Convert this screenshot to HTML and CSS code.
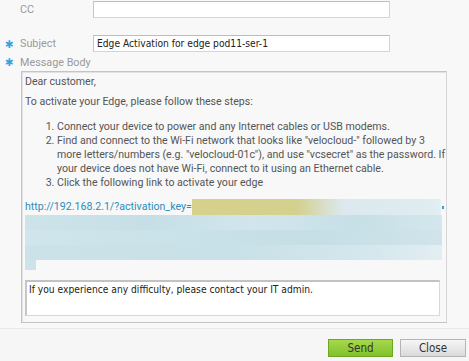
FILE: index.html
```html
<!DOCTYPE html>
<html lang="en">
<head>
  <meta charset="UTF-8" />
  <title>Send Activation Email</title>
  <link rel="stylesheet" href="styles.css">
</head>
<body>

  <!-- email fields -->
  <div class="form">
    <div class="row row-cc">
      <label class="label">CC</label>
      <input class="field" type="text" value="">
    </div>

    <div class="row row-subject">
      <label class="label"><span class="req">✱</span>Subject</label>
      <input class="field" type="text" value="Edge Activation for edge pod11-ser-1">
    </div>

    <div class="label label-body"><span class="req">✱</span>Message Body</div>

    <div class="message">
      <p class="greet">Dear customer,</p>
      <p>To activate your Edge, please follow these steps:</p>
      <ol class="steps">
        <li>Connect your device to power and any Internet cables or USB modems.</li>
        <li>Find and connect to the Wi-Fi network that looks like "velocloud-" followed by 3 more letters/numbers (e.g. "velocloud-01c"), and use "vcsecret" as the password. If your device does not have Wi-Fi, connect to it using an Ethernet cable.</li>
        <li>Click the following link to activate your edge</li>
      </ol>

      <div class="link-row">
        <span class="link">http://192.168.2.1/?activation_key=</span>
        <span class="key"></span>
        <span class="dot"></span>
      </div>
      <div class="redact">
        <div class="redact-line"></div>
        <div class="redact-line"></div>
        <div class="redact-line"></div>
      </div>
      <div class="redact-tail"></div>

      <textarea class="note">If you experience any difficulty, please contact your IT admin.</textarea>
    </div>
  </div>

  <!-- buttons -->
  <div class="footer">
    <button class="btn btn-send">Send</button>
    <button class="btn btn-close">Close</button>
  </div>

</body>
</html>
```

FILE: styles.css
```css
body {
  margin: 0;
  background: #f8f8f8;
  font-family: Roboto, "Liberation Sans", sans-serif;
  font-size: 10.6px;
  color: #555;
  width: 469px;
  height: 361px;
  overflow: hidden;
}

.form {
  padding-top: 1px;
  height: 328px;
  box-sizing: border-box;
}

.row {
  display: flex;
  align-items: center;
}

.row-cc {
  height: 17px;
}

.row-subject {
  margin-top: 17px;
  height: 17px;
}

.label {
  position: relative;
  width: 73px;
  padding-left: 20px;
  color: #9a9a9a;
  font-size: 10.8px;
  white-space: nowrap;
}

.req {
  position: absolute;
  left: 5px;
  top: 0;
  color: #2ea6e0;
  font-family: "DejaVu Sans", sans-serif;
  font-size: 10.5px;
  line-height: 14px;
}

.label-body {
  margin-top: 3px;
  line-height: 15px;
}

.field {
  width: 297px;
  height: 17px;
  box-sizing: border-box;
  margin: 0;
  padding: 0 3px;
  background: #fff;
  border: 1px solid #d4d4d4;
  border-top-color: #bdbdbd;
  border-left-color: #c6c6c6;
  font-family: "DejaVu Sans Condensed", "Liberation Sans", sans-serif;
  font-size: 10.2px;
  color: #222;
}

.message {
  margin: 1px 0 0 21px;
  width: 426px;
  height: 252px;
  box-sizing: border-box;
  padding: 3px 0 0 3px;
  border: 1px solid #c4c4c4;
  border-right-color: #d6d6d6;
  box-shadow: inset 1px 1px 0 #e2e2e2;
  background: #f8f8f8;
  color: #555;
  line-height: 14px;
}

.message p {
  margin: 0;
}

.greet {
  margin-bottom: 6px !important;
}

.steps {
  margin: 11px 0 0;
  padding-left: 32px;
}

.link-row {
  display: flex;
  align-items: center;
  margin-top: 9px;
  height: 16px;
}

.link {
  flex: none;
  color: #2b8dbb;
}

.key {
  width: 249px;
  height: 16px;
  background: linear-gradient(to right, #d6d28c 0, #d4d08e 105px, #dbe8ed 150px, #dfecf0 240px, #e6eff2 249px);
}

.dot {
  width: 2px;
  height: 3px;
  margin-left: 1px;
  background: #3aa0d0;
}

.redact {
  margin-right: 4px;
}

.redact-line {
  height: 15px;
  background: linear-gradient(to right, #cde3ea, #c6dfe7 30%, #d2e5ec 55%, #c7dfe6 80%, #d4e7ed);
}

.redact-line:nth-child(2) {
  background: linear-gradient(to right, #d0e5ec, #c9e1e8 40%, #c5dee6 70%, #d0e4ea);
}

.redact-line:nth-child(3) {
  background: linear-gradient(to right, #cce2e9, #c8e0e7 50%, #d6e8ee 85%, #e2eef2);
}

.redact-tail {
  width: 11px;
  height: 10px;
  background: #cde3ea;
}

.note {
  display: block;
  width: 415px;
  height: 36px;
  box-sizing: border-box;
  margin-top: 10px;
  padding: 1px 2px;
  resize: none;
  background: #fff;
  border: 1px solid #d8d8d8;
  border-top: 2px solid #c2c2c2;
  border-left: 2px solid #c6c6c6;
  font-family: "DejaVu Sans Condensed", "Liberation Sans", sans-serif;
  font-size: 10.2px;
  line-height: 14px;
  color: #222;
}

.footer {
  display: flex;
  justify-content: flex-end;
  gap: 7px;
  padding: 10px 3px 0 0;
  border-top: 1px solid #e8e8e8;
  height: 32px;
  background: #f6f6f6;
}

.btn {
  width: 65px;
  height: 18px;
  padding: 0;
  font-family: "DejaVu Sans Condensed", "Liberation Sans", sans-serif;
  font-size: 11.5px;
  color: #333;
  cursor: pointer;
}

.btn-send {
  background: linear-gradient(to bottom, #a6d94a, #80c22c);
  border: 1px solid #6fa623;
}

.btn-close {
  width: 66px;
  background: linear-gradient(to bottom, #f6f6f6, #dadada);
  border: 1px solid #b4b4b4;
}
```
